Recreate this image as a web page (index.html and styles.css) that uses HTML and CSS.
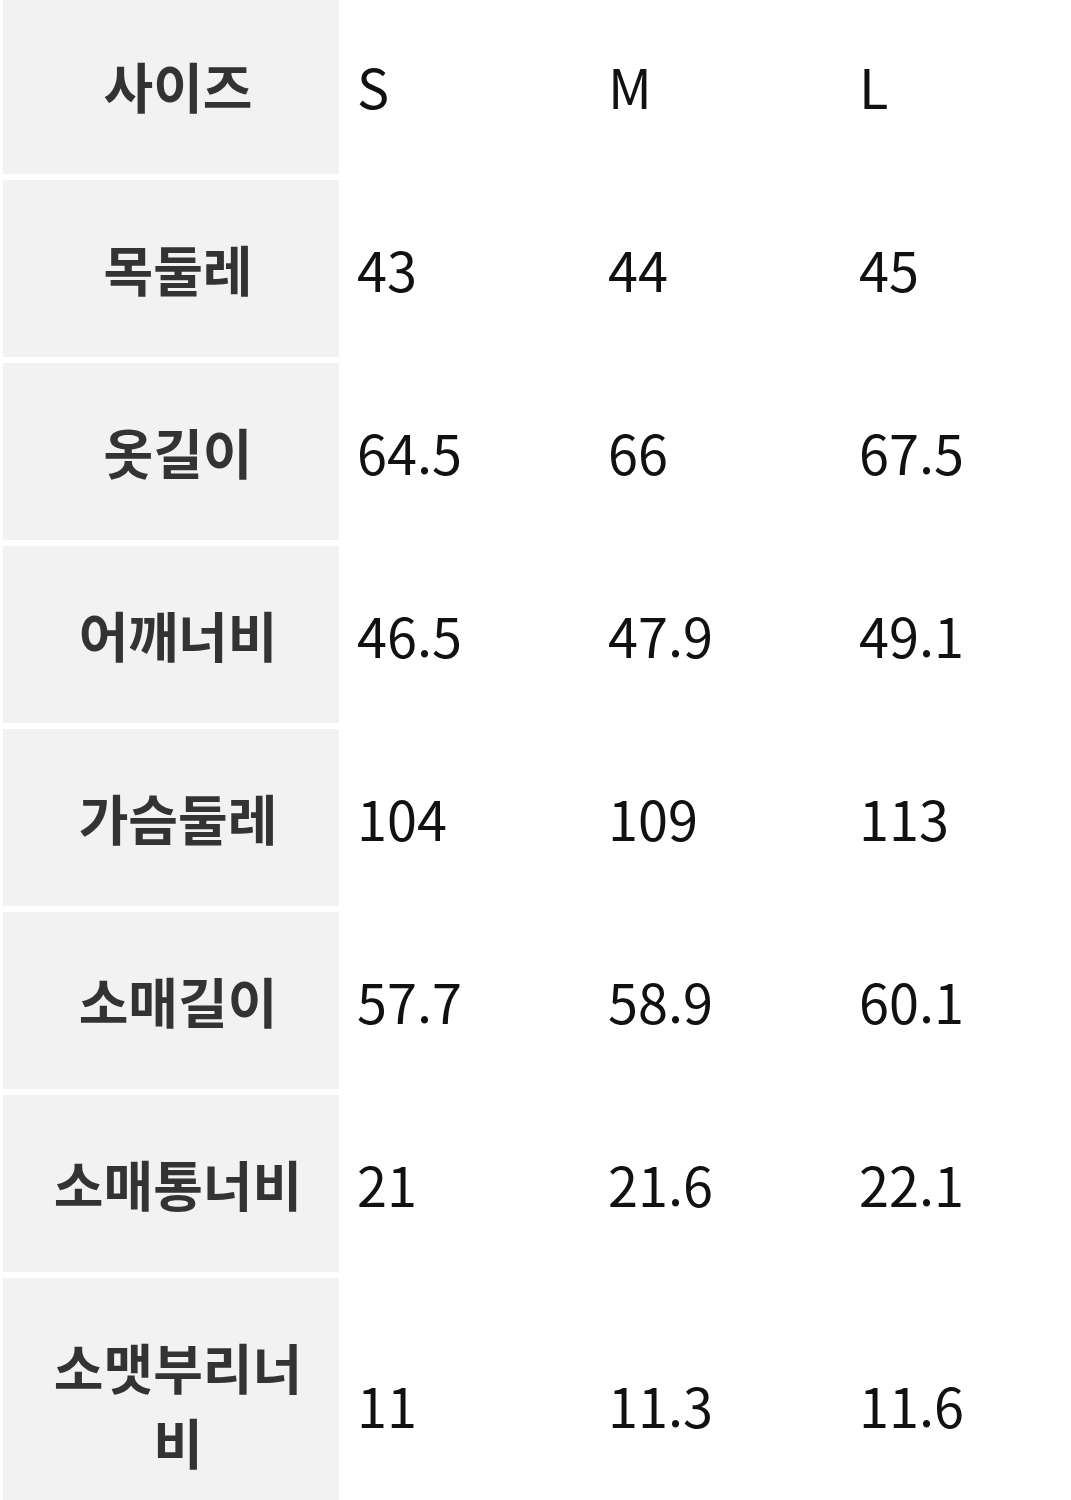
FILE: index.html
```html
<!DOCTYPE html>
<html lang="ko">
<head>
<meta charset="utf-8">
<link rel="stylesheet" href="styles.css">
</head>
<body>
<div class="size-table">
  <div class="th"><span class="label">사이즈</span></div><div class="td">S</div><div class="td">M</div><div class="td">L</div>
  <div class="th"><span class="label">목둘레</span></div><div class="td">43</div><div class="td">44</div><div class="td">45</div>
  <div class="th"><span class="label">옷길이</span></div><div class="td">64.5</div><div class="td">66</div><div class="td">67.5</div>
  <div class="th"><span class="label">어깨너비</span></div><div class="td">46.5</div><div class="td">47.9</div><div class="td">49.1</div>
  <div class="th"><span class="label">가슴둘레</span></div><div class="td">104</div><div class="td">109</div><div class="td">113</div>
  <div class="th"><span class="label">소매길이</span></div><div class="td">57.7</div><div class="td">58.9</div><div class="td">60.1</div>
  <div class="th"><span class="label">소매통너비</span></div><div class="td">21</div><div class="td">21.6</div><div class="td">22.1</div>
  <div class="th"><span class="label">소맷부리너비</span></div><div class="td">11</div><div class="td">11.3</div><div class="td">11.6</div>
</div>
</body>
</html>
```

FILE: styles.css
```css
html, body {
  margin: 0;
  padding: 0;
  background: #ffffff;
}
body {
  font-family: "Noto Sans CJK KR", "Noto Sans", sans-serif;
  overflow: hidden;
}
.size-table {
  display: grid;
  grid-template-columns: 336px 248px 248px 1fr;
  column-gap: 3px;
  row-gap: 6px;
  padding-left: 3px;
  margin-top: -3px;
}
.th {
  background: #f2f2f2;
  color: #333333;
  font-weight: 700;
  font-size: 54px;
  line-height: 75px;
  padding: 51px 0;
  display: flex;
  align-items: center;
  justify-content: center;
}
.label {
  display: block;
  width: 262px;
  margin-left: 14px;
  text-align: center;
}
.td {
  color: #111111;
  font-weight: 400;
  font-size: 54px;
  line-height: 75px;
  padding-left: 15px;
  display: flex;
  align-items: center;
}
```
